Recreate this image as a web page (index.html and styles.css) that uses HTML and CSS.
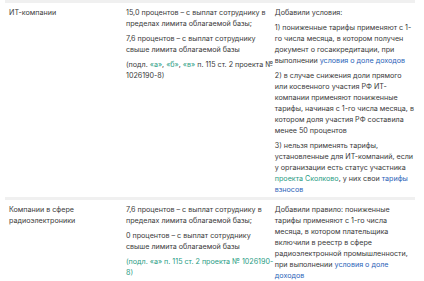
FILE: index.html
```html
<!DOCTYPE html>
<html lang="ru">
<head>
<meta charset="utf-8">
<link rel="stylesheet" href="styles.css">
</head>
<body>
<div class="table">
  <div class="row">
    <div class="cell c1"><p>ИТ-компании</p></div>
    <div class="cell c2">
      <p>15,0 процентов – с выплат сотруднику в пределах лимита облагаемой базы;</p>
      <p>7,6 процентов – с выплат сотруднику свыше лимита облагаемой базы</p>
      <p>(подл. <span class="g">«а»</span>, <span class="g">«б»</span>, <span class="g">«в»</span> п. 115 ст. 2 проекта № 1026190-8)</p>
    </div>
    <div class="cell c3">
      <p>Добавили условия:</p>
      <p>1) пониженные тарифы применяют с 1-го числа месяца, в котором получен документ о госаккредитации, при выполнении <span class="b">условия о доле доходов</span></p>
      <p>2) в случае снижения доли прямого или косвенного участия РФ ИТ-компании применяют пониженные тарифы, начиная с 1-го числа месяца, в котором доля участия РФ составила менее 50 процентов</p>
      <p>3) нельзя применять тарифы, установленные для ИТ-компаний, если у организации есть статус участника <span class="g">проекта Сколково</span>, у них свои <span class="b">тарифы взносов</span></p>
    </div>
  </div>
  <div class="row">
    <div class="cell c1"><p>Компании в сфере радиоэлектроники</p></div>
    <div class="cell c2">
      <p>7,6 процентов – с выплат сотруднику в пределах лимита облагаемой базы;</p>
      <p>0 процентов – с выплат сотруднику свыше лимита облагаемой базы</p>
      <p class="g">(подл. «а» п. 115 ст. 2 проекта № 1026190-8)</p>
    </div>
    <div class="cell c3">
      <p>Добавили правило: пониженные тарифы применяют с 1-го числа месяца, в котором плательщика включили в реестр в сфере радиоэлектронной промышленности, при выполнении <span class="b">условия о доле доходов</span></p>
    </div>
  </div>
</div>
</body>
</html>
```

FILE: styles.css
```css
html, body {
  margin: 0;
  padding: 0;
  background: #fff;
}
body {
  font-family: Inter, Roboto, sans-serif;
  font-size: 7.15px;
  line-height: 11px;
  color: #3a3a3a;
}
.table {
  margin-left: 5px;
  width: 410.2px;
  border-top: 3px solid #f0f0f0;
}
.row {
  display: grid;
  grid-template-columns: 117px 152.8px 140.4px;
  border-bottom: 3px solid #f0f0f0;
}
.cell {
  padding: 4px 0 2px 4px;
}
.c3 {
  padding-left: 0;
}
p {
  margin: 0 0 4px 0;
}
p:last-child {
  margin-bottom: 0;
}
.g { color: #2a9c84; }
.b { color: #2b63b8; }
```
